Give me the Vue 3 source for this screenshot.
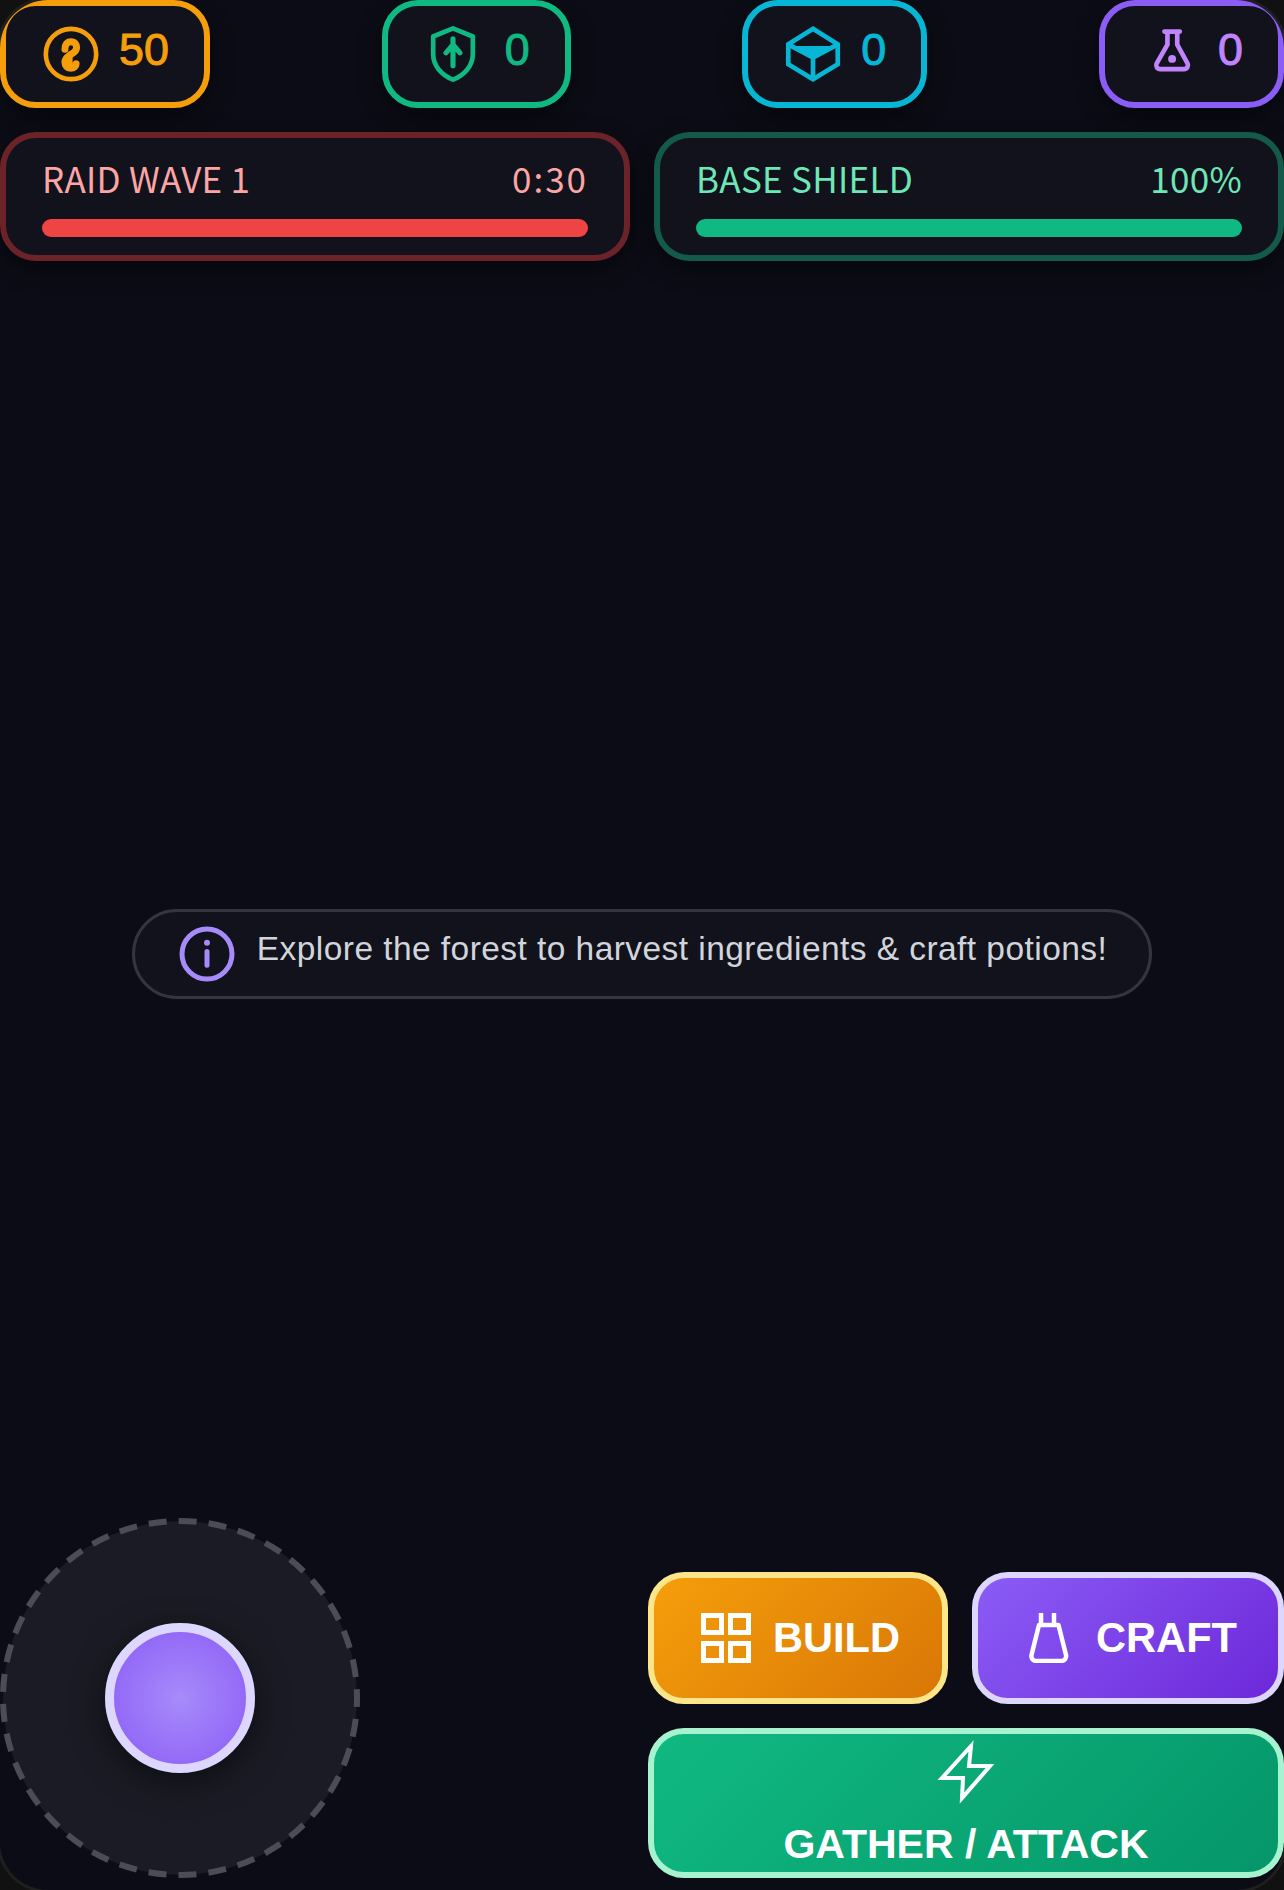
<script setup>
const stats = [
  { id: 'coin', value: 50, cls: 'gold' },
  { id: 'shield', value: 0, cls: 'green' },
  { id: 'box', value: 0, cls: 'cyan' },
  { id: 'flask', value: 0, cls: 'violet' }
]
</script>

<template>
  <div class="screen">
    <div class="stats">
      <div v-for="s in stats" :key="s.id" class="stat" :class="s.cls">
        <svg class="stat-icon" viewBox="0 0 24 24" fill="none" stroke="currentColor" stroke-width="2" stroke-linecap="round" stroke-linejoin="round">
          <template v-if="s.id === 'coin'">
            <circle cx="12" cy="12" r="10.800" />
            <path d="M9.400 10c0-2 .9-3.300 2.600-3.300s2.400 1.200 2.400 2.500c0 2-2 2.600-3 3.400-1.200.8-2 1.700-2 2.900 0 1.500 1 2.600 2.500 2.600 1.300 0 2.300-.7 2.300-1.900M11.200 13.500v3.500" stroke-width="3" />
          </template>
          <template v-else-if="s.id === 'shield'">
            <path d="M12 1 20.500 4.500V12c0 5-3.500 9-8.500 11-5-2-8.500-6-8.500-11V4.500z" />
            <path d="M12 5.500V17M9 11.500 12 8l3 3.500" stroke-width="2.200" />
          </template>
          <template v-else-if="s.id === 'box'">
            <path d="M12 1.200 22.600 7.800V16.400L12 22.800 1.400 16.400V7.800z" stroke-linecap="butt" stroke-linejoin="miter" />
            <path d="M2 8.200 12 13.500 22 8.200M12 13.500V22.800" stroke-linecap="butt" stroke-linejoin="miter" />
            <path d="M3 8.600H21L12 13.600z" fill="currentColor" stroke="none" />
          </template>
          <template v-else>
            <path d="M9.600 2.400H16.200M10.900 2.400V8L6.300 16c-.6 1.200.2 2.500 1.500 2.500H18c1.300 0 2.100-1.300 1.500-2.500L15.100 8V2.400" />
            <circle cx="12.900" cy="14.100" r="1.700" fill="currentColor" stroke="none" />
          </template>
        </svg>
        <span class="stat-value">{{ s.value }}</span>
      </div>
    </div>

    <div class="bars">
      <div class="bar-card raid">
        <div class="bar-head"><span>RAID WAVE 1</span><span class="timer">0:30</span></div>
        <div class="bar-fill"></div>
      </div>
      <div class="bar-card base">
        <div class="bar-head"><span>BASE SHIELD</span><span>100%</span></div>
        <div class="bar-fill"></div>
      </div>
    </div>

    <div class="middle">
      <div class="hint">
        <svg class="hint-icon" viewBox="0 0 24 24" fill="none" stroke="#a78bfa" stroke-width="2" stroke-linecap="round">
          <circle cx="12" cy="12" r="10" />
          <path d="M12 11v5.500" />
          <circle cx="12" cy="7.500" r="1.200" fill="#a78bfa" stroke="none" />
        </svg>
        <span class="hint-text">Explore the forest to harvest ingredients &amp; craft potions!</span>
      </div>
    </div>

    <div class="controls">
      <div class="joystick">
        <svg class="joystick-ring" viewBox="0 0 360 360">
          <circle cx="180" cy="180" r="177" fill="#1a1b24" stroke="#4b4c56" stroke-width="6" stroke-dasharray="18 12.050" stroke-dashoffset="9" />
        </svg>
        <div class="knob"></div>
      </div>
      <div class="actions">
        <button class="btn build">
          <svg class="btn-icon" viewBox="0 0 50 50" fill="none" stroke="#fff" stroke-width="5">
            <path d="M2.500 2.500h18v17h-18zM29.500 2.500h18v17h-18zM2.500 30.500h18v17h-18zM29.500 30.500h18v17h-18z" />
          </svg>
          BUILD
        </button>
        <button class="btn craft">
          <svg class="btn-icon" viewBox="-5 0 50 50" fill="none" stroke="#fff" stroke-width="4.500" stroke-linejoin="round">
            <path d="M12 0v12M25 0v12M10 12h19.500l7.500 30c.7 3-1.500 6-4.500 6H7c-3 0-5.200-3-4.500-6z" />
          </svg>
          CRAFT
        </button>
        <button class="btn gather">
          <svg class="bolt" viewBox="0 0 60 66" fill="none" stroke="#fff" stroke-width="4">
            <path d="M35 7 6 39h21l-1 20 28-32H33z" />
          </svg>
          GATHER / ATTACK
        </button>
      </div>
    </div>
  </div>
</template>

<style>
html, body { background: #111; }
</style>

<style scoped>
.screen {
  width: 1284px;
  height: 1890px;
  box-sizing: border-box;
  border-radius: 48px;
  background: #0b0c15;
  /* device frame, only shows round the clipped corners */
  box-shadow: 0 0 0 3px #1f1f20;
  display: flex;
  flex-direction: column;
  font-family: "Liberation Sans", Arial, sans-serif;
  overflow: hidden;
}

.stats {
  display: flex;
  justify-content: space-between;
  align-items: flex-start;
}

.stat {
  height: 108px;
  box-sizing: border-box;
  display: flex;
  align-items: center;
  gap: 20px;
  padding: 0 35px 0 37px;
  border: 6px solid;
  border-radius: 36px;
  background: #11121c;
  box-shadow: 0 8px 24px rgba(0, 0, 0, 0.4);
  font-size: 44.800px;
  -webkit-text-stroke: 1px currentColor;
}

.stat-icon { width: 56px; height: 56px; }
.stat-value { padding-bottom: 10px; line-height: 1; }

.gold { border-color: #f59e0b; color: #f59e0b; }
.green { border-color: #10b981; color: #10b981; gap: 24px; }
.cyan { border-color: #06b6d4; color: #06b6d4; }
.violet { border-color: #8b5cf6; color: #c084fc; }

.bars {
  display: grid;
  grid-template-columns: 630px 630px;
  gap: 24px;
  margin-top: 24px;
}

.bar-card {
  height: 129px;
  box-sizing: border-box;
  padding: 18px 36px 0;
  border: 6px solid;
  border-radius: 36px;
  background: #11121c;
  box-shadow: 0 8px 24px rgba(0, 0, 0, 0.4);
}

.bar-head {
  display: flex;
  justify-content: space-between;
  font-family: "Noto Sans CJK JP", sans-serif;
  font-size: 35px;
  line-height: 44px;
  letter-spacing: 0.3px;
}

.timer { letter-spacing: 2px; }

.bar-fill {
  height: 18px;
  border-radius: 9px;
  margin-top: 19px;
}

.raid { border-color: #6b2329; color: #fca5a5; }
.raid .bar-fill { background: #ef4444; }
.base { border-color: #135a4b; color: #6ee7b7; }
.base .bar-fill { background: #10b981; }

.middle {
  flex: 1;
  display: flex;
  align-items: center;
  justify-content: center;
  padding-top: 128px;
}

.hint {
  display: flex;
  align-items: center;
  gap: 20px;
  height: 90px;
  box-sizing: border-box;
  padding: 0 42px;
  border: 3px solid #34353e;
  border-radius: 45px;
  background: #11121c;
  color: #d1d5db;
  font-size: 33.500px;
  letter-spacing: 0.44px;
}

.hint-icon { width: 60px; height: 60px; }
.hint-text { padding-bottom: 10px; line-height: 44px; }

.controls {
  display: flex;
  justify-content: space-between;
  align-items: flex-end;
  padding-bottom: 12px;
}

.joystick {
  position: relative;
  width: 360px;
  height: 360px;
  display: flex;
  align-items: center;
  justify-content: center;
}

.joystick-ring {
  position: absolute;
  inset: 0;
  width: 360px;
  height: 360px;
}

.knob {
  position: relative;
  width: 150px;
  height: 150px;
  box-sizing: border-box;
  border: 9px solid #ddd6fe;
  border-radius: 50%;
  background: radial-gradient(circle, #a78bfa, #8b5cf6);
  box-shadow: 0 8px 32px rgba(0, 0, 0, 0.5);
}

.actions {
  width: 636px;
  display: grid;
  grid-template-columns: 300px 312px;
  gap: 24px;
}

.btn {
  box-sizing: border-box;
  height: 132px;
  display: flex;
  align-items: center;
  justify-content: center;
  gap: 22px;
  padding: 0 0 0 5px;
  border: 6px solid;
  border-radius: 36px;
  color: #fff;
  font-family: inherit;
  font-size: 41.600px;
  font-weight: 700;
}

.btn-icon { width: 50px; height: 50px; }

.build { border-color: #fde68a; background: linear-gradient(135deg, #f59e0b, #d97706); }
.craft { border-color: #ddd6fe; background: linear-gradient(135deg, #8b5cf6, #6d28d9); }
.gather {
  grid-column: 1 / 3;
  height: 150px;
  flex-direction: column;
  justify-content: flex-start;
  gap: 15px;
  padding: 5px 0 0;
  font-size: 41px;
  line-height: 48px;
  border-color: #a7f3d0;
  background: linear-gradient(135deg, #10b981, #059669);
}

.bolt { width: 60px; height: 66px; flex-shrink: 0; }
</style>
